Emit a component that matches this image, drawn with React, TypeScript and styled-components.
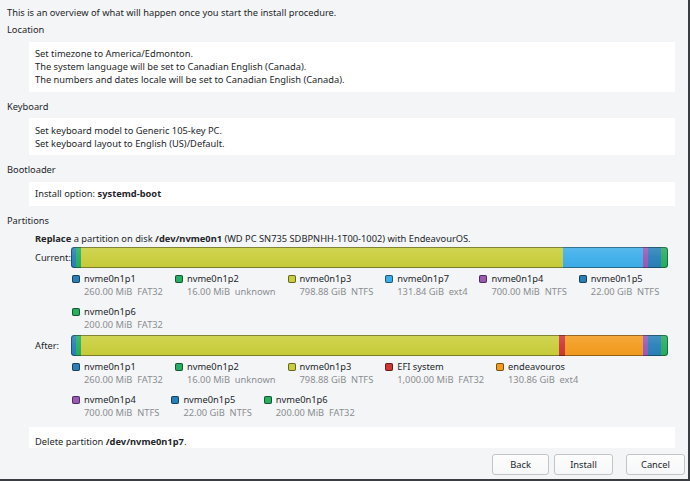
import React from 'react';
import styled, { createGlobalStyle } from 'styled-components';

const GlobalStyle = createGlobalStyle`
  html, body { margin: 0; padding: 0; background: #f4f5f7; }
  body {
    font-family: "Noto Sans", "Open Sans", sans-serif;
    font-size: 9.3px;
    line-height: 13px;
    color: #232629;
  }
  * { box-sizing: border-box; }
  b { font-weight: 700; }
`;

const Window = styled.div`
  width: 690px;
  height: 481px;
  display: flex;
  flex-direction: column;
  background: #f4f5f7;
  border-right: 2px solid #3a3d41;
  border-bottom: 2px solid #3a3d41;
  overflow: hidden;
`;

const ScrollArea = styled.div`
  flex: 1 1 auto;
  min-height: 0;
  overflow: hidden;
  padding: 6px 13px 0 7px;
`;

const Intro = styled.div`
  margin-bottom: 4px;
`;

const SectionTitle = styled.div`
  margin-bottom: 5.5px;
`;

const InfoBox = styled.div`
  margin-left: 22px;
  margin-bottom: 8px;
  background: #ffffff;
  padding: 5.5px 6px;
`;

const PartitionBody = styled.div`
  margin-left: 22px;
  padding-left: 6px;
`;

const ReplaceLine = styled.div`
  margin-bottom: 2px;
`;

const Preview = styled.div<{ $first?: boolean }>`
  margin-top: ${(p) => (p.$first ? 0 : 4)}px;
`;

const BarRow = styled.div`
  display: flex;
  align-items: center;
`;

const RowLabel = styled.div`
  width: 36px;
  flex: 0 0 36px;
`;

const Bar = styled.div`
  position: relative;
  flex: 1 1 auto;
  height: 21px;
  margin-right: 7px;
  display: flex;
  border-radius: 3px;
  overflow: hidden;
  &::after {
    content: "";
    position: absolute;
    inset: 0;
    border: 1px solid rgba(0, 0, 0, 0.38);
    border-radius: 3px;
    pointer-events: none;
  }
`;

const Segment = styled.div<{ $w: number; $c: string }>`
  flex: ${(p) => p.$w} 1 0;
  min-width: 0;
  background: linear-gradient(
      to bottom,
      rgba(255, 255, 255, 0.14) 0%,
      rgba(255, 255, 255, 0.04) 50%,
      rgba(0, 0, 0, 0.02) 100%
    ),
    ${(p) => p.$c};
`;

const Legend = styled.div`
  margin-left: 37px;
  margin-top: 4px;
  display: flex;
  flex-wrap: wrap;
  column-gap: 12px;
  row-gap: 7px;
`;

const LegendItem = styled.div`
  display: grid;
  grid-template-columns: 8px auto;
  column-gap: 4px;
`;

const Swatch = styled.span<{ $c: string }>`
  grid-column: 1;
  grid-row: 1;
  align-self: center;
  width: 8px;
  height: 8px;
  border-radius: 2px;
  background: ${(p) => p.$c};
  box-shadow: inset 0 0 0 1px rgba(0, 0, 0, 0.5);
`;

const ItemName = styled.span`
  grid-column: 2;
  grid-row: 1;
  white-space: nowrap;
`;

const ItemSize = styled.span`
  grid-column: 2;
  grid-row: 2;
  white-space: pre;
  color: #8a8d90;
`;

const JobsBox = styled.div`
  margin-left: -6px;
  margin-top: 8px;
  background: #ffffff;
  padding: 8px 6px 6px;
`;

const ButtonBar = styled.div`
  flex: 0 0 auto;
  display: flex;
  justify-content: flex-end;
  padding: 6px 3px 4px 0;
`;

const Button = styled.button<{ $w: number; $gap: number }>`
  width: ${(p) => p.$w}px;
  height: 21px;
  margin-left: ${(p) => p.$gap}px;
  padding: 0;
  font-family: "Noto Sans", "Open Sans", sans-serif;
  font-size: 9.3px;
  line-height: 13px;
  color: #232629;
  background: linear-gradient(to bottom, #fdfdfd, #f6f7f8);
  border: 1px solid #c2c5c8;
  border-radius: 3px;
`;

type Part = { name: string; size: string; color: string };
type Seg = { w: number; color: string };

const C = {
  blue: '#2980b9',
  green: '#27ae60',
  yellow: '#c9ce3b',
  lightBlue: '#3daee9',
  purple: '#9b59b6',
  red: '#cf3636',
  orange: '#f39c1f',
};

const currentSegs: Seg[] = [
  { w: 5, color: C.blue },
  { w: 5, color: C.green },
  { w: 482, color: C.yellow },
  { w: 80, color: C.lightBlue },
  { w: 5, color: C.purple },
  { w: 13, color: C.blue },
  { w: 7, color: C.green },
];

const afterSegs: Seg[] = [
  { w: 5, color: C.blue },
  { w: 5, color: C.green },
  { w: 478, color: C.yellow },
  { w: 6, color: C.red },
  { w: 78, color: C.orange },
  { w: 5, color: C.purple },
  { w: 13, color: C.blue },
  { w: 7, color: C.green },
];

const currentParts: Part[] = [
  { name: 'nvme0n1p1', size: '260.00 MiB  FAT32', color: C.blue },
  { name: 'nvme0n1p2', size: '16.00 MiB  unknown', color: C.green },
  { name: 'nvme0n1p3', size: '798.88 GiB  NTFS', color: C.yellow },
  { name: 'nvme0n1p7', size: '131.84 GiB  ext4', color: C.lightBlue },
  { name: 'nvme0n1p4', size: '700.00 MiB  NTFS', color: C.purple },
  { name: 'nvme0n1p5', size: '22.00 GiB  NTFS', color: C.blue },
  { name: 'nvme0n1p6', size: '200.00 MiB  FAT32', color: C.green },
];

const afterParts: Part[] = [
  { name: 'nvme0n1p1', size: '260.00 MiB  FAT32', color: C.blue },
  { name: 'nvme0n1p2', size: '16.00 MiB  unknown', color: C.green },
  { name: 'nvme0n1p3', size: '798.88 GiB  NTFS', color: C.yellow },
  { name: 'EFI system', size: '1,000.00 MiB  FAT32', color: C.red },
  { name: 'endeavouros', size: '130.86 GiB  ext4', color: C.orange },
  { name: 'nvme0n1p4', size: '700.00 MiB  NTFS', color: C.purple },
  { name: 'nvme0n1p5', size: '22.00 GiB  NTFS', color: C.blue },
  { name: 'nvme0n1p6', size: '200.00 MiB  FAT32', color: C.green },
];

function PartitionPreview({ label, segs, parts, first }: { label: string; segs: Seg[]; parts: Part[]; first?: boolean }) {
  return (
    <Preview $first={first}>
      <BarRow>
        <RowLabel>{label}</RowLabel>
        <Bar>
          {segs.map((s, i) => (
            <Segment key={i} $w={s.w} $c={s.color} />
          ))}
        </Bar>
      </BarRow>
      <Legend>
        {parts.map((p, i) => (
          <LegendItem key={i}>
            <Swatch $c={p.color} />
            <ItemName>{p.name}</ItemName>
            <ItemSize>{p.size}</ItemSize>
          </LegendItem>
        ))}
      </Legend>
    </Preview>
  );
}

export default function App() {
  return (
    <>
      <GlobalStyle />
      <Window>
        <ScrollArea>
          <Intro>This is an overview of what will happen once you start the install procedure.</Intro>

          <SectionTitle>Location</SectionTitle>
          <InfoBox>
            <div>Set timezone to America/Edmonton.</div>
            <div>The system language will be set to Canadian English (Canada).</div>
            <div>The numbers and dates locale will be set to Canadian English (Canada).</div>
          </InfoBox>

          <SectionTitle>Keyboard</SectionTitle>
          <InfoBox>
            <div>Set keyboard model to Generic 105-key PC.</div>
            <div>Set keyboard layout to English (US)/Default.</div>
          </InfoBox>

          <SectionTitle>Bootloader</SectionTitle>
          <InfoBox>
            Install option: <b>systemd-boot</b>
          </InfoBox>

          <SectionTitle>Partitions</SectionTitle>
          <PartitionBody>
            <ReplaceLine>
              <b>Replace</b> a partition on disk <b>/dev/nvme0n1</b> (WD PC SN735 SDBPNHH-1T00-1002) with EndeavourOS.
            </ReplaceLine>
            <PartitionPreview label="Current:" segs={currentSegs} parts={currentParts} first />
            <PartitionPreview label="After:" segs={afterSegs} parts={afterParts} />
            <JobsBox>
              Delete partition <b>/dev/nvme0n1p7</b>.
            </JobsBox>
          </PartitionBody>
        </ScrollArea>
        <ButtonBar>
          <Button $w={57} $gap={0}>Back</Button>
          <Button $w={59} $gap={5}>Install</Button>
          <Button $w={59} $gap={13}>Cancel</Button>
        </ButtonBar>
      </Window>
    </>
  );
}
